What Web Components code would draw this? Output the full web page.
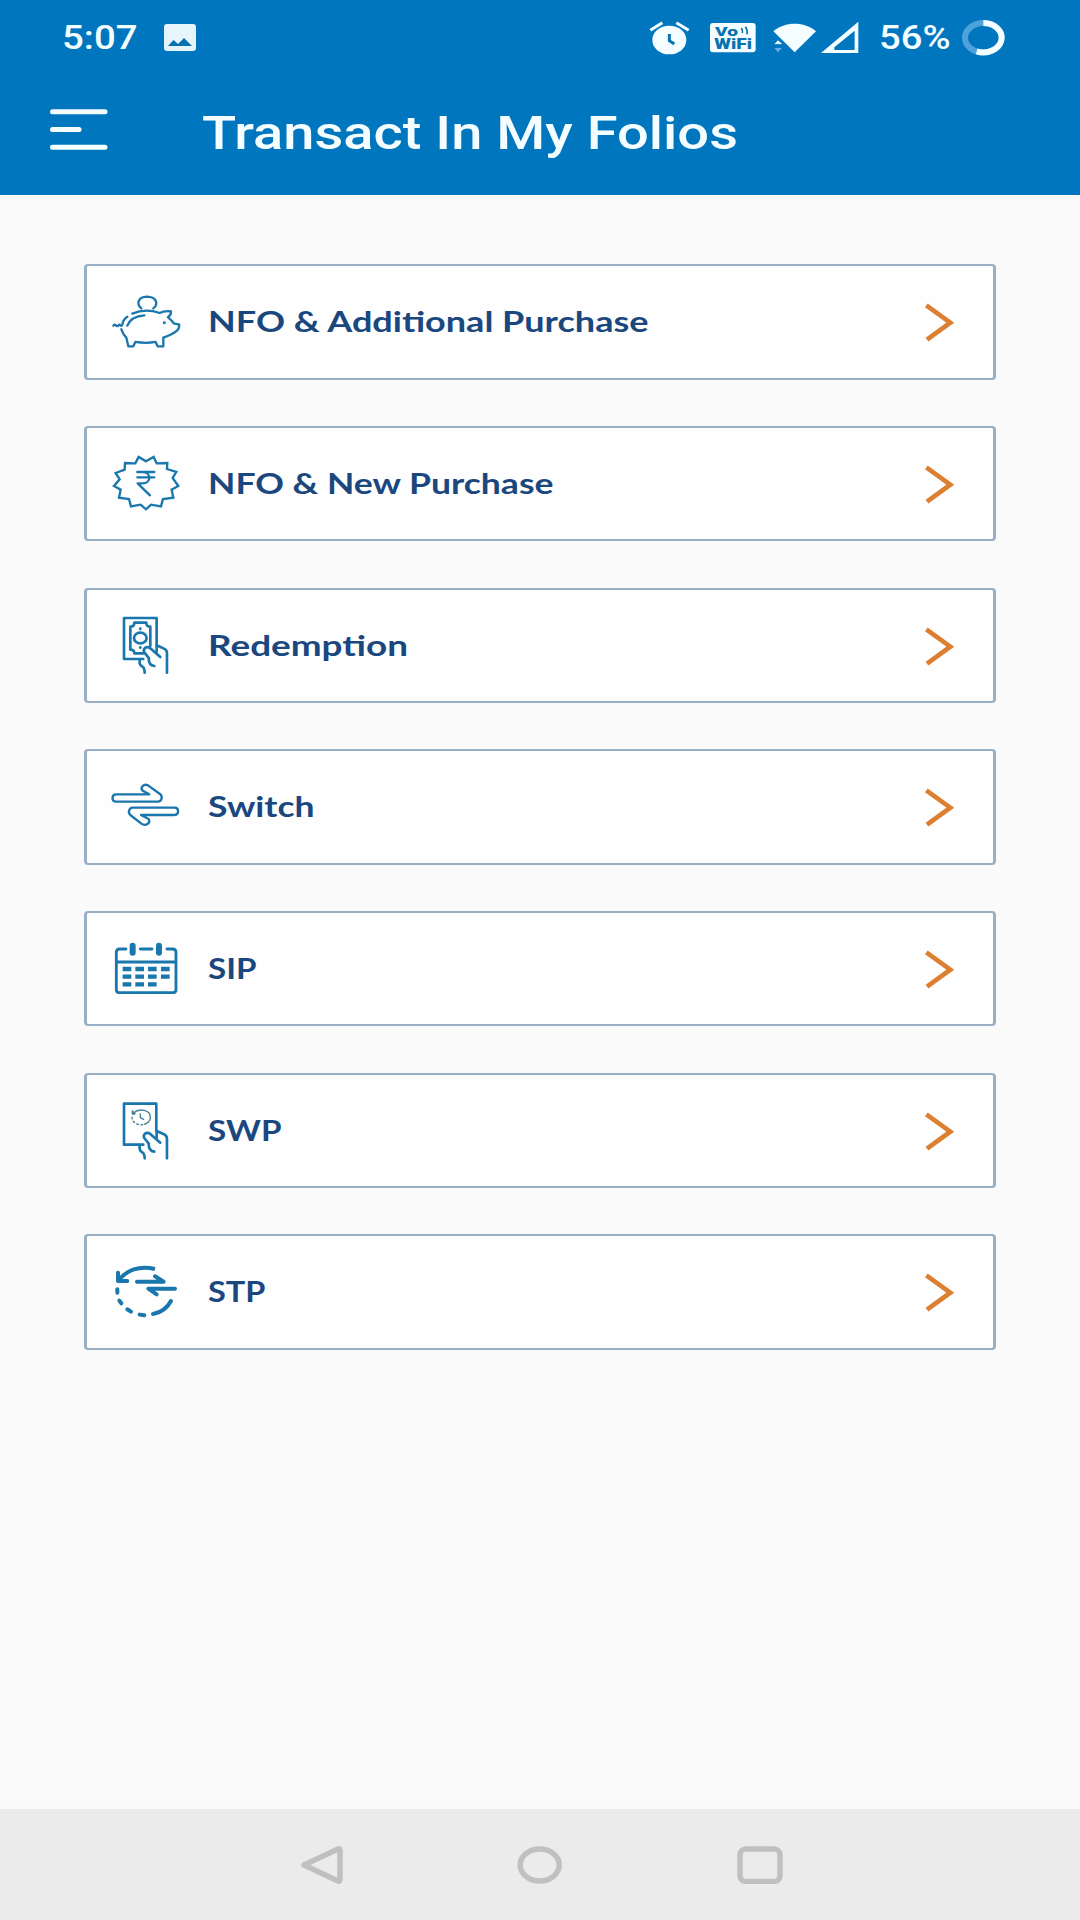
<!DOCTYPE html>
<html lang="en">
<head>
<meta charset="utf-8">
<title>Transact In My Folios</title>
<style>
    body {
        margin: 0;
        background-color: #fafafa;
    }
</style>
</head>
<body>
<app-screen>
    <status-bar slot="status" time="5:07" battery="56%"></status-bar>
    <app-header slot="header" title="Transact In My Folios"></app-header>
    <folio-row icon="piggy" label="NFO &amp; Additional Purchase" span="440.5"></folio-row>
    <folio-row icon="badge" label="NFO &amp; New Purchase" span="345.5"></folio-row>
    <folio-row icon="redeem" label="Redemption" span="200"></folio-row>
    <folio-row icon="switch" label="Switch" span="106.5"></folio-row>
    <folio-row icon="calendar" label="SIP" span="48.5"></folio-row>
    <folio-row icon="withdraw" label="SWP" span="73.5"></folio-row>
    <folio-row icon="transfer" label="STP" span="57.5"></folio-row>
    <nav-bar slot="nav"></nav-bar>
</app-screen>

<script>
// hand shared by the redemption and the withdrawal icons
const HAND = `
    <path d="M179 238V250Q180 256 187 260Q194 264 194 278M206 234Q206 256 223 258M241 231L211 205Q203 199 195 204Q189 210 193 217L207 235M230 196L252 206Q261 210 261 219V278M230 196V216"/>
`

const ICONS = {
    piggy: { top: 34, width: 7, body: `
        <path d="M184 161C170 150 171 127 201 126C232 127 235 150 220 161"/>
        <path d="M157 177C182 166 214 166 239 175Q252 168 273 170Q274 181 264 188Q277 198 281 206L298 210Q298 221 291 228C279 238 264 244 250 249V275H233L227 262Q198 267 166 262L160 275H145L139 249Q130 240 124 224"/>
        <path d="M142 213C149 195 165 184 193 182M100 213Q104 208 107 212Q111 217 118 210Q125 217 127 209Q130 193 142 186"/>
        <circle cx="253" cy="204" r="2" stroke-width="5"/>` },
    badge: { top: 24, width: 7, body: `
        <path stroke-linejoin="miter" d="M198 124L221 111L230 130L262 129L261 147L289 156L278 174L295 198L275 209L280 233L249 237L243 259L213 254L198 268L182 254L153 259L147 237L117 233L122 209L102 198L119 178L107 159L134 149L135 129L166 130L176 111Z"/>
        <path d="M172 156H223M172 172H223M172 156H187C215 156 215 190 187 190H173L210 226"/>` },
    redeem: { top: 30, width: 8, body: `
        <path d="M230 196V114H132V237H190"/>
        <path d="M190 220H163Q163 209 151 209V140Q163 140 163 128H199Q199 140 211 140V198"/>
        <ellipse cx="181" cy="174" rx="19" ry="16"/>
        <path d="M181 146V147M181 202V203"/>${HAND}` },
    switch: { top: 18, width: 7, body: `
        <path d="M108 148H208L188 137C179 127 192 115 204 121L240 147C249 155 246 168 235 170H108C94 170 94 148 108 148Z"/>
        <path d="M284 188H158C147 189 143 202 151 210L184 236C197 245 213 234 206 222L183 210H284C298 210 298 188 284 188Z"/>` },
    calendar: { top: 24, width: 8.5, body: `
        <path d="M138 132H119Q109 132 109 142V254Q109 263 119 263H278Q288 263 288 254V142Q288 132 278 132H261M181 132H216M109 171H288"/>
        <path stroke-width="18" d="M158 122V143M237 122V143"/>
        <path stroke-width="13" stroke-linecap="butt" d="M128 192H154M166 192H192M204 192H230M243 192H269M128 215H154M166 215H192M204 215H230M243 215H269M128 238H154M166 238H192M204 238H230"/>` },
    withdraw: { top: 28, width: 8, body: `
        <path d="M229 196V114H132V237H190"/>
        <g stroke="#437f92" stroke-width="4">
            <path d="M160 142C179 126 212 133 211 156C211 166 202 174 193 176"/>
            <path stroke-dasharray="5 8" d="M188 177C170 180 155 168 156 153"/>
            <path stroke-width="6" d="M158 137V144H164"/>
            <path d="M181 145V156L191 161"/>
        </g>${HAND}` },
    transfer: { top: 18, width: 12, body: `
        <path stroke-linecap="butt" d="M116 151C139 121 178 105 225 117"/>
        <path d="M114 128V153H142M171 155H251L225 139M285 176H205L230 193M273 213C262 234 242 248 219 252"/>
        <path d="M112 178V188M118 212L124 220M142 238L153 245M179 254L193 256"/>` }
}

// text set on one line and widened to a given length
customElements.define("wide-text", class WideText extends HTMLElement{
    constructor(){
        super()
        this.shadow = this.attachShadow({mode: "open"})
        const span = this.getAttribute("span")
        const height = this.getAttribute("height")
        this.shadow.innerHTML = `
            <style>
            :host {
                display: block;
                flex: none;
                width: ${span}px;
                height: ${height}px;
            }
            svg {
                display: block;
                overflow: visible;
                fill: currentColor;
            }
            </style>
            <svg width="${span}" height="${height}">
                <text x="0" y="${this.getAttribute("baseline")}" textLength="${span}" lengthAdjust="spacingAndGlyphs"></text>
            </svg>
        `
        this.shadow.querySelector("text").textContent = this.getAttribute("text")
    }
})

customElements.define("status-bar", class StatusBar extends HTMLElement{
    constructor(){
        super()
        this.shadow = this.attachShadow({mode: "open"})
        this.shadow.innerHTML = `
            <style>
            :host {
                display: flex;
                justify-content: space-between;
                height: 66px;
                padding: 0 75px 0 61.8px;
                color: #f4fdff;
                font: 500 33.5px Roboto, sans-serif;
            }
            .side {
                display: flex;
            }
            svg {
                display: block;
                height: 66px;
                flex: none;
                overflow: visible;
            }
            .photo { margin-left: 26.5px; }
            .volte { margin-left: 20.7px; }
            .wifi { margin-left: 17.6px; }
            .signal { margin-left: 5.3px; }
            .percent { margin-left: 20.3px; }
            .ring { margin-left: 11.8px; }
            </style>
            <div class="side">
                <wide-text text="${this.getAttribute("time")}" span="75.5" height="66" baseline="49.3"></wide-text>
                <svg class="photo" width="32" viewBox="0 0 32 66">
                    <rect y="24" width="32" height="27" rx="3" fill="#e6f5fb"/>
                    <path d="M4 46L9.5 40L14 44L20 38L28 46Z" fill="#0871b0"/>
                </svg>
            </div>
            <div class="side">
                <svg width="40.7" viewBox="146 0 122 198">
                    <ellipse cx="207" cy="120" rx="51" ry="43" fill="currentColor"/>
                    <path d="M150 91L186 68M228 68L265 91" stroke="currentColor" stroke-width="9"/>
                    <path d="M207 102V122L222 132" stroke="#0871b0" stroke-width="9" fill="none"/>
                </svg>
                <svg class="volte" width="45.7" viewBox="330 0 137 198">
                    <rect x="330" y="69" width="137" height="88" rx="9" fill="currentColor"/>
                    <g fill="#0871b0" font-family="Roboto" font-weight="900">
                        <text x="345" y="108" font-size="41" textLength="69" lengthAdjust="spacingAndGlyphs">Vo</text>
                        <text x="343" y="147" font-size="43" textLength="113" lengthAdjust="spacingAndGlyphs">WiFi</text>
                    </g>
                    <path d="M424 84Q429 91 427 99M436 80Q444 91 441 103" stroke="#0871b0" stroke-width="5" fill="none"/>
                </svg>
                <svg class="wifi" width="42.7" viewBox="520 0 128 198">
                    <path d="M521 94C555 64 615 64 649 94L585 157Z" fill="currentColor"/>
                    <path d="M521 134L535 119L551 134Z" fill="currentColor" stroke="#0076bf" stroke-width="3"/>
                    <path d="M524 144H547L535 157Z" fill="#65aedd"/>
                </svg>
                <svg class="signal" width="37.3" viewBox="664 0 112 198">
                    <path fill-rule="evenodd" d="M664 159L776 65V159ZM765 92L704 142V150H765Z" fill="currentColor"/>
                </svg>
                <wide-text class="percent" text="${this.getAttribute("battery")}" span="71.5" height="66" baseline="49.3"></wide-text>
                <svg class="ring" width="42.7" viewBox="1088 0 128 198">
                    <ellipse cx="1152" cy="113" rx="55" ry="44" fill="none" stroke="#4da2dc" stroke-width="18"/>
                    <path d="M1152 69A55 44 0 1 1 1132 154" fill="none" stroke="currentColor" stroke-width="18"/>
                </svg>
            </div>
        `
    }
})

customElements.define("app-header", class AppHeader extends HTMLElement{
    constructor(){
        super()
        this.shadow = this.attachShadow({mode: "open"})
        this.shadow.innerHTML = `
            <style>
            :host {
                display: flex;
                align-items: center;
                gap: 94.5px;
                height: 129px;
                padding-left: 50.3px;
                color: #f4fdff;
                font: 500 47px Roboto, sans-serif;
            }
            svg {
                display: block;
            }
            </style>
            <svg width="57.5" height="129" fill="currentColor">
                <rect y="43.3" width="57.5" height="5" rx="2.5"/>
                <rect y="61" width="31.5" height="5" rx="2.5"/>
                <rect y="78.7" width="57.5" height="5" rx="2.5"/>
            </svg>
            <wide-text text="${this.getAttribute("title")}" span="536" height="129" baseline="82.7"></wide-text>
        `
    }
})

customElements.define("folio-row", class FolioRow extends HTMLElement{
    constructor(){
        super()
        this.shadow = this.attachShadow({mode: "open"})
        const icon = ICONS[this.getAttribute("icon")]
        this.shadow.innerHTML = `
            <style>
            :host {
                display: flex;
                box-sizing: border-box;
                height: 115.4px;
                padding: 0 36.3px 0 23.3px;
                border: 2px solid #98b0c6;
                border-width: 2px 3px;
                border-radius: 4px;
                background-color: #fefefe;
                color: #1b477f;
                font: 700 28px Lato, "Open Sans", sans-serif;
            }
            svg {
                display: block;
                flex: none;
                height: 111.3px;
                fill: none;
                stroke-linecap: round;
                stroke-linejoin: round;
            }
            wide-text {
                margin-left: 24.7px;
                -webkit-text-stroke: .4px currentColor;
            }
            .arrow {
                margin-left: auto;
                stroke-linecap: butt;
                stroke-linejoin: miter;
            }
            </style>
            <svg width="73.3" viewBox="90 ${icon.top} 220 334" stroke="#1977ad" stroke-width="${icon.width}">${icon.body}</svg>
            <wide-text text="${this.getAttribute("label")}" span="${this.getAttribute("span")}" height="111" baseline="66.4"></wide-text>
            <svg class="arrow" width="33.3" viewBox="130 34 100 334" stroke="#dc7f31" stroke-width="14">
                <path d="M140 152L212 204L142 255"/>
            </svg>
        `
    }
})

customElements.define("nav-bar", class NavBar extends HTMLElement{
    constructor(){
        super()
        this.shadow = this.attachShadow({mode: "open"})
        this.shadow.innerHTML = `
            <style>
            :host {
                display: flex;
                justify-content: space-between;
                box-sizing: border-box;
                height: 111px;
                padding: 37px 297px 0 300.5px;
                background-color: #ebebeb;
            }
            svg {
                height: 38px;
                fill: none;
                stroke: #c0c0c0;
                stroke-width: 5.5;
                stroke-linejoin: round;
            }
            </style>
            <svg width="42" viewBox="0 0 42 38"><path d="M3 19L37 3Q39 2 39 5V33Q39 36 37 35Z"/></svg>
            <svg width="45" viewBox="0 0 45 38"><ellipse cx="22.7" cy="19" rx="19.5" ry="16"/></svg>
            <svg width="46" viewBox="0 0 46 38"><rect x="3" y="3" width="40" height="32.5" rx="6"/></svg>
        `
    }
})

customElements.define("app-screen", class AppScreen extends HTMLElement{
    constructor(){
        super()
        this.shadow = this.attachShadow({mode: "open"})
        this.shadow.innerHTML = `
            <style>
            :host {
                display: flex;
                flex-direction: column;
                width: 1080px;
                height: 1920px;
                overflow: hidden;
                background-color: #fafafa;
            }
            .top {
                height: 195px;
                background-color: #0076bf;
            }
            .list {
                flex: 1;
                display: flex;
                flex-direction: column;
                gap: 46.27px;
                padding: 69.3px 84px 0;
            }
            </style>
            <div class="top">
                <slot name="status"></slot>
                <slot name="header"></slot>
            </div>
            <div class="list"><slot></slot></div>
            <slot name="nav"></slot>
        `
    }
})
</script>
</body>
</html>
